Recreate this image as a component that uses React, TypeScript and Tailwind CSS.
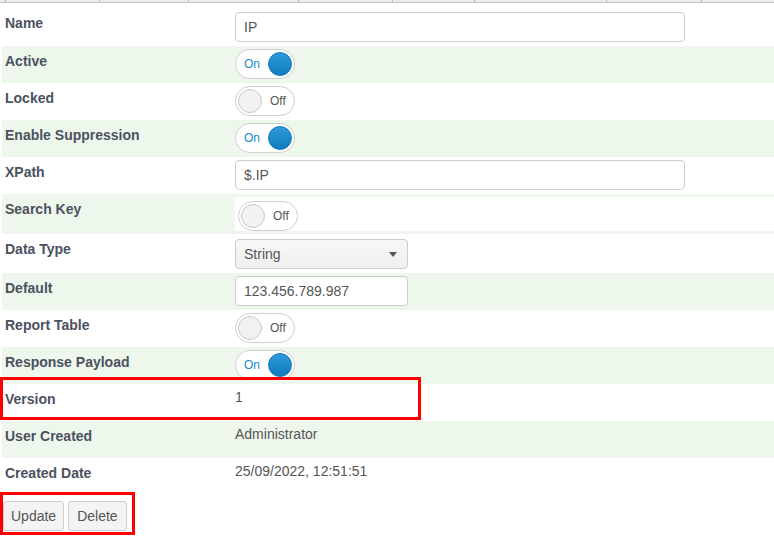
import React from 'react';

type Row =
  | { label: string; kind: 'input'; value: string; width: string; tall?: boolean }
  | { label: string; kind: 'toggle'; on: boolean; inset?: boolean }
  | { label: string; kind: 'select'; value: string }
  | { label: string; kind: 'text'; value: string; marked?: boolean };

const ROWS: Row[] = [
  { label: 'Name', kind: 'input', value: 'IP', width: 'w-[450px]', tall: true },
  { label: 'Active', kind: 'toggle', on: true },
  { label: 'Locked', kind: 'toggle', on: false },
  { label: 'Enable Suppression', kind: 'toggle', on: true },
  { label: 'XPath', kind: 'input', value: '$.IP', width: 'w-[450px]' },
  { label: 'Search Key', kind: 'toggle', on: false, inset: true },
  { label: 'Data Type', kind: 'select', value: 'String' },
  { label: 'Default', kind: 'input', value: '123.456.789.987', width: 'w-[173px]' },
  { label: 'Report Table', kind: 'toggle', on: false },
  { label: 'Response Payload', kind: 'toggle', on: true },
  { label: 'Version', kind: 'text', value: '1', marked: true },
  { label: 'User Created', kind: 'text', value: 'Administrator' },
  { label: 'Created Date', kind: 'text', value: '25/09/2022, 12:51:51' },
];

const TAB_WIDTHS = ['w-[6px]', 'w-[94px]', 'w-[89px]', 'w-[110px]', 'w-[94px]', 'w-[82px]', 'w-[132px]', 'w-[95px]'];

function Toggle({ on }: { on: boolean }) {
  return (
    <div className="flex h-[30px] w-[60px] items-center rounded-full border border-[#cfcfcf] bg-white px-[2px]">
      {on ? (
        <>
          <span className="ml-[6px] flex-1 text-[12px] text-[#1a8ad0]">On</span>
          <span className="h-[24px] w-[24px] rounded-full border border-[#1378b8] bg-gradient-to-b from-[#2d9ad9] to-[#0f7bbd]" />
        </>
      ) : (
        <>
          <span className="h-[24px] w-[24px] rounded-full border border-[#c8c8c8] bg-[#f2f2f2]" />
          <span className="ml-[8px] text-[12px] text-[#555]">Off</span>
        </>
      )}
    </div>
  );
}

function Value({ row }: { row: Row }) {
  if (row.kind === 'input') {
    return (
      <div className={`flex h-[30px] ${row.width} items-center rounded-[4px] border border-[#cccccc] bg-white px-[8px] text-[14px] text-[#555]`}>
        {row.value}
      </div>
    );
  }
  if (row.kind === 'toggle') return <Toggle on={row.on} />;
  if (row.kind === 'select') {
    return (
      <div className="flex h-[30px] w-[173px] items-center justify-between rounded-[4px] border border-[#cccccc] bg-gradient-to-b from-[#f7f7f7] to-[#efefef] pl-[8px] pr-[10px] text-[14px] text-[#555]">
        {row.value}
        <span className="h-0 w-0 border-x-[4px] border-t-[5px] border-x-transparent border-t-[#555]" />
      </div>
    );
  }
  return <div className="pt-[3px] text-[14px] leading-[20px] text-[#555]">{row.value}</div>;
}

export default function App() {
  return (
    <div className="h-[547px] w-[774px] overflow-hidden bg-white font-['Liberation_Sans',Arial,sans-serif]">
      {/* tab strip peeking in at the top */}
      <div className="flex h-[3px] border-b border-[#c9c9c9] bg-[#ececec]">
        {TAB_WIDTHS.map((w, i) => (
          <div key={i} className={`${w} h-full border-r border-[#bdbdbd]`} />
        ))}
      </div>

      <div className="ml-[2px]">
        {ROWS.map((row, i) => {
          const green = i % 2 === 1;
          const tall = row.kind === 'input' && row.tall;
          const inset = row.kind === 'toggle' && row.inset;
          const marked = row.kind === 'text' && row.marked;
          const height = tall ? 'h-[43px]' : inset ? 'h-[40px]' : row.kind === 'select' ? 'h-[39px]' : 'h-[37px]';
          return (
            <div key={row.label} className={`relative grid grid-cols-[233px_1fr] ${height} ${green ? 'bg-[#eef7ec]' : 'bg-white'}`}>
              <div className={`pl-[3px] text-[14px] font-bold leading-[20px] text-[#4b5160] ${tall ? 'pt-[10px]' : 'pt-[5px]'}`}>
                {row.label}
              </div>
              <div
                className={
                  tall
                    ? 'pt-[9px]'
                    : inset
                      ? 'my-[3px] bg-white pl-[3px] pt-[4px]'
                      : row.kind === 'select'
                        ? 'pt-[5px]'
                        : row.kind === 'text'
                          ? ''
                          : 'pt-[3px]'
                }
              >
                <Value row={row} />
              </div>
              {marked && (
                <div className="pointer-events-none absolute left-[-2px] top-[-7px] h-[43px] w-[421px] border-[3px] border-[#ff0000]" />
              )}
            </div>
          );
        })}
      </div>

      <div className="relative mt-[6px] flex gap-[4px] pl-[3px]">
        <button className="h-[30px] rounded-[3px] border border-[#cccccc] bg-[#f4f4f4] px-[7px] text-[14px] text-[#555]">
          Update
        </button>
        <button className="h-[30px] rounded-[3px] border border-[#cccccc] bg-[#f4f4f4] px-[8px] text-[14px] text-[#555]">
          Delete
        </button>
        <div className="pointer-events-none absolute left-0 top-[-9px] h-[43px] w-[135px] border-[3px] border-[#ff0000]" />
      </div>
    </div>
  );
}
